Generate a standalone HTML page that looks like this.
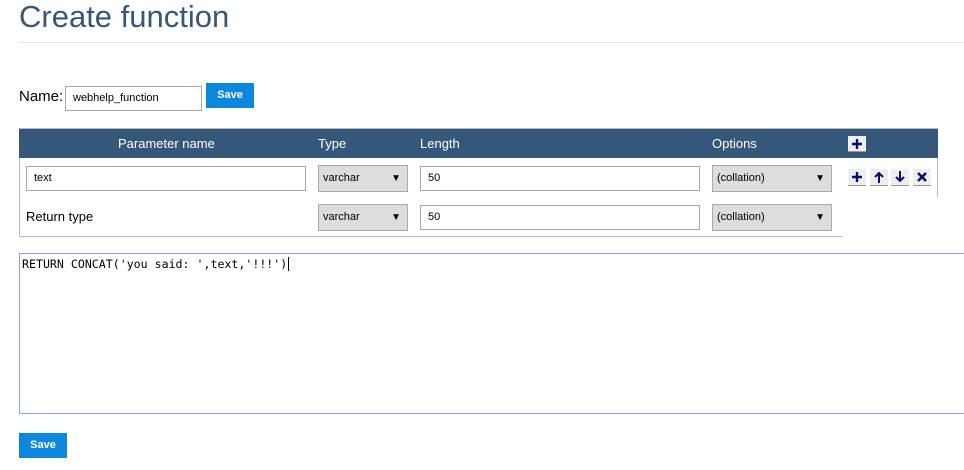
<!DOCTYPE html>
<html><head><meta charset="utf-8"><style>
body{margin:0;width:964px;height:470px;overflow:hidden;background:#fff;font-family:"Liberation Sans",Arial,sans-serif;position:relative}
.a{position:absolute}
h1{position:absolute;left:19px;top:-1px;margin:0;font-weight:normal;font-size:31px;color:#34587c}
.hr{left:19px;top:42px;width:945px;height:1px;background:#e5e5e5}
.inp{background:#fff;border:1px solid #aaa;box-sizing:border-box;font-size:11px;color:#000;padding-left:7px;line-height:23px}
.sel{background:#ddd;border:1px solid #aaa;box-sizing:border-box;font-size:11px;padding-left:4px;line-height:25px}
.sel:after{content:"▼";position:absolute;right:6px;top:0;font-size:10px}
.btn{background:#0b87de;color:#fff;font-weight:bold;font-size:11px;text-align:center}
.th{color:#fff;font-size:13px;top:136px}
.ib{width:18px;height:16px;background:#eee;border-bottom:1px solid #999}
.ib svg{display:block;margin:2px auto 0}
</style></head><body>
<h1>Create function</h1>
<div class="a hr"></div>
<div class="a" style="left:19px;top:88px;font-size:15px">Name:</div>
<div class="a inp" style="left:65px;top:86px;width:137px;height:25px;line-height:23px">webhelp_function</div>
<div class="a btn" style="left:206px;top:83px;width:48px;height:25px;line-height:25px">Save</div>

<div class="a" style="left:19px;top:128px;width:1px;height:109px;background:#bbb"></div>
<div class="a" style="left:937px;top:128px;width:1px;height:69px;background:#bbb"></div>
<div class="a" style="left:19px;top:128px;width:919px;height:30px;background:#34577a;border-top:1px solid #bbb;box-sizing:border-box"></div>
<div class="a" style="left:19px;top:236px;width:823px;height:1px;background:#bbb"></div>
<div class="a th" style="left:118px">Parameter name</div>
<div class="a th" style="left:318px">Type</div>
<div class="a th" style="left:420px">Length</div>
<div class="a th" style="left:712px">Options</div>
<div class="a ib" style="left:848px;top:136px;height:15px"><svg width="12" height="12"><path d="M6 1V11M1 6H11" stroke="#00106e" stroke-width="2.4"/></svg></div>

<div class="a inp" style="left:26px;top:166px;width:280px;height:25px">text</div>
<div class="a sel" style="left:318px;top:165px;width:90px;height:27px">varchar</div>
<div class="a inp" style="left:420px;top:166px;width:280px;height:25px">50</div>
<div class="a sel" style="left:712px;top:165px;width:120px;height:27px">(collation)</div>
<div class="a ib" style="left:848px;top:169px"><svg width="12" height="12"><path d="M6 1V11M1 6H11" stroke="#00106e" stroke-width="2.4"/></svg></div>
<div class="a ib" style="left:870px;top:169px"><svg width="12" height="12"><path d="M6 12V2M2 6L6 2L10 6" stroke="#00106e" stroke-width="2" fill="none"/></svg></div>
<div class="a ib" style="left:891px;top:169px"><svg width="12" height="12"><path d="M6 0V10M2 6L6 10L10 6" stroke="#00106e" stroke-width="2" fill="none"/></svg></div>
<div class="a ib" style="left:913px;top:169px"><svg width="12" height="12"><path d="M2 2L10 10M10 2L2 10" stroke="#00106e" stroke-width="2.6"/></svg></div>

<div class="a" style="left:26px;top:209px;font-size:13px">Return type</div>
<div class="a sel" style="left:318px;top:204px;width:90px;height:27px">varchar</div>
<div class="a inp" style="left:420px;top:205px;width:280px;height:25px">50</div>
<div class="a sel" style="left:712px;top:204px;width:120px;height:27px">(collation)</div>

<div class="a" style="left:19px;top:253px;width:960px;height:161px;border:1px solid #7fa8d6;box-sizing:border-box;font-family:'DejaVu Sans Mono',monospace;font-size:11.6px;padding:3px 2px;white-space:pre">RETURN CONCAT('you said: ',text,'!!!')<span style="border-left:1px solid #000;margin-left:1px"></span></div>

<div class="a btn" style="left:19px;top:433px;width:48px;height:25px;line-height:25px">Save</div>
</body></html>
